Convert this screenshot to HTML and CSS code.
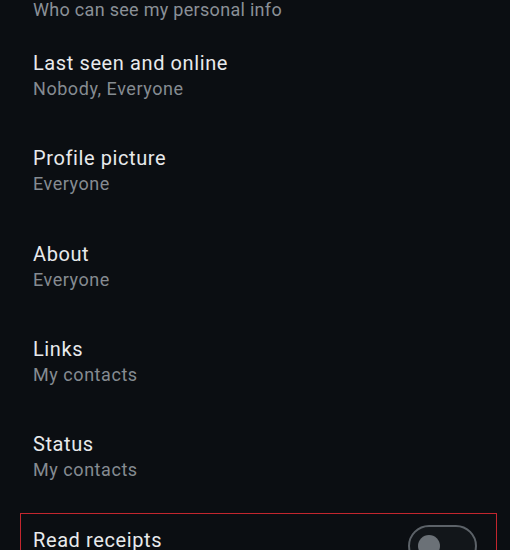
FILE: index.html
```html
<!DOCTYPE html>
<html lang="en">
<head>
    <meta charset="UTF-8">
    <meta name="viewport" content="width=device-width, initial-scale=1.0">
    <title>Privacy</title>
    <link rel="stylesheet" href="styles.css">
</head>
<body>
    <div class="list">
        <p class="section-title">Who can see my personal info</p>
        <div class="item">
            <div class="item-title">Last seen and online</div>
            <div class="item-sub">Nobody, Everyone</div>
        </div>
        <div class="item">
            <div class="item-title">Profile picture</div>
            <div class="item-sub">Everyone</div>
        </div>
        <div class="item">
            <div class="item-title">About</div>
            <div class="item-sub">Everyone</div>
        </div>
        <div class="item">
            <div class="item-title">Links</div>
            <div class="item-sub">My contacts</div>
        </div>
        <div class="item">
            <div class="item-title">Status</div>
            <div class="item-sub">My contacts</div>
        </div>
        <div class="item item-toggle highlighted">
            <div class="item-text">
                <div class="item-title">Read receipts</div>
            </div>
            <div class="switch"><span class="knob"></span></div>
        </div>
    </div>
</body>
</html>
```

FILE: styles.css
```css
body {
    margin: 0;
    background-color: #0b0e12;
    font-family: Roboto, "Noto Sans", sans-serif;
    overflow: hidden;
}
.list {
    padding: 0 33px;
}
.section-title {
    margin: -2px 0 5.5px;
    font-size: 18px;
    line-height: 24px;
    letter-spacing: 0.3px;
    color: #8a9097;
}
.item {
    padding: 22.65px 0 21.65px;
}
.item-title {
    font-size: 20px;
    line-height: 26px;
    letter-spacing: 0.6px;
    color: #e8eaec;
}
.item-sub {
    padding-top: 1px;
    font-size: 18px;
    line-height: 24px;
    letter-spacing: 0.55px;
    color: #858b91;
}
.item-toggle {
    display: flex;
    align-items: flex-start;
    gap: 20px;
}
.item-text {
    flex: 1;
}
.highlighted {
    position: relative;
}
.highlighted::after {
    content: "";
    position: absolute;
    top: 8.6px;
    left: -13px;
    right: -20px;
    bottom: 0;
    border: 1px solid #c3262e;
}
.switch {
    box-sizing: border-box;
    width: 69px;
    height: 42px;
    margin: -2px 0 0 0;
    border: 2.5px solid #5c6268;
    border-radius: 21px;
    background-color: #12161a;
    display: flex;
    align-items: center;
    padding-left: 8px;
    flex-shrink: 0;
}
.knob {
    width: 22px;
    height: 22px;
    border-radius: 50%;
    background-color: #6b7177;
}
```
